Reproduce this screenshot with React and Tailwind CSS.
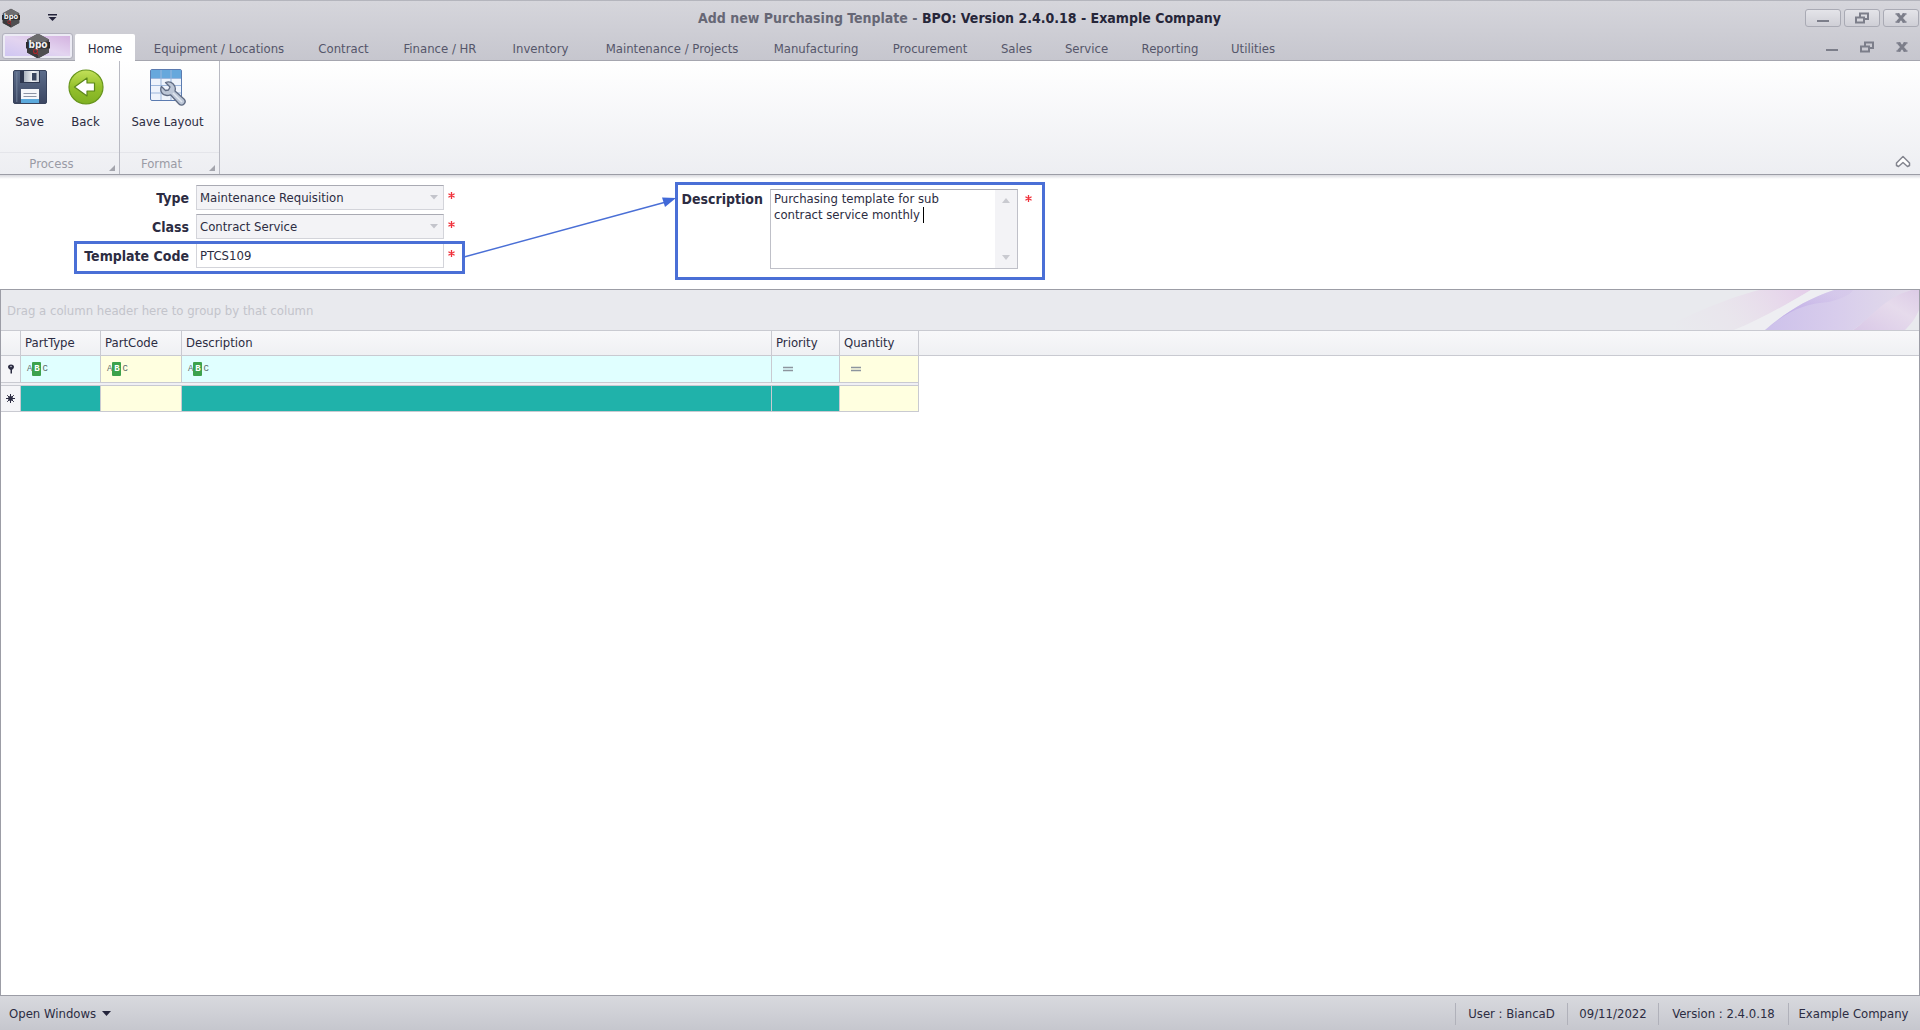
import { useState } from "react";
import clsx from "clsx";

const TABS = [
  { name: "Home", width: "w-[60px] mr-[2px]" },
  { name: "Equipment / Locations", width: "w-[164px]" },
  { name: "Contract", width: "w-[85px]" },
  { name: "Finance / HR", width: "w-[108px]" },
  { name: "Inventory", width: "w-[93px]" },
  { name: "Maintenance / Projects", width: "w-[170px]" },
  { name: "Manufacturing", width: "w-[118px]" },
  { name: "Procurement", width: "w-[110px]" },
  { name: "Sales", width: "w-[63px]" },
  { name: "Service", width: "w-[77px]" },
  { name: "Reporting", width: "w-[90px]" },
  { name: "Utilities", width: "w-[76px]" },
];

const COLUMNS = [
  { name: "PartType", filter: "abc", tint: "bg-[#e0ffff]", fill: "bg-[#20b2aa]" },
  { name: "PartCode", filter: "abc", tint: "bg-[#ffffe0]", fill: "bg-[#ffffe0]" },
  { name: "Description", filter: "abc", tint: "bg-[#e0ffff]", fill: "bg-[#20b2aa]" },
  { name: "Priority", filter: "eq", tint: "bg-[#e0ffff]", fill: "bg-[#20b2aa]" },
  { name: "Quantity", filter: "eq", tint: "bg-[#ffffe0]", fill: "bg-[#ffffe0]" },
];

const STATUS = [
  { text: "User : BiancaD", width: "w-28" },
  { text: "09/11/2022", width: "w-[91px]" },
  { text: "Version : 2.4.0.18", width: "w-[130px]" },
  { text: "Example Company", width: "w-[130px]" },
];

function Logo({ className }) {
  return (
    <svg viewBox="0 0 24 26" className={className} aria-hidden="true">
      <path d="M12 0.5 23 6.5V19.5L12 25.5 1 19.5V6.5Z" fill="#4b4b4d" />
      <path d="M12 0.5 23 6.5 12 12 1 6.5Z" fill="#6c6c6e" />
      <path d="M1 15 12 18V25.5L1 19.5Z" fill="#3a3a3c" />
      <path d="M23 15 12 18V25.5L23 19.5Z" fill="#4f4f51" />
      <rect x="0" y="9" width="24" height="6.5" fill="#2c2c2e" />
      <text x="12" y="14.5" textAnchor="middle" fontSize="10" fontWeight="bold" fill="#f1f1f1">
        bpo
      </text>
      <circle cx="9.5" cy="18.5" r="2" fill="none" stroke="#a8282c" strokeWidth="1.1" />
      <path d="M10.5 20.5 12.5 22" stroke="#a8282c" strokeWidth="1" />
    </svg>
  );
}

function SaveIcon() {
  return (
    <svg width="34" height="34" viewBox="1 1 34 34" aria-hidden="true">
      <defs>
        <linearGradient id="disk" x1="0" y1="0" x2="0" y2="1">
          <stop offset="0" stopColor="#5c6d8b" />
          <stop offset="1" stopColor="#3b4661" />
        </linearGradient>
        <linearGradient id="shutter" x1="0" y1="0" x2="1" y2="0">
          <stop offset="0" stopColor="#aab3c0" />
          <stop offset="0.6" stopColor="#f3f5f8" />
          <stop offset="1" stopColor="#c4cbd5" />
        </linearGradient>
      </defs>
      <rect x="1.5" y="1.5" width="33" height="33" rx="1.5" fill="url(#disk)" stroke="#38435c" />
      <rect x="4" y="3" width="1.5" height="30" fill="#76869f" opacity="0.6" />
      <rect x="8" y="2" width="20" height="12" fill="#2d3750" />
      <rect x="12" y="2" width="15" height="11" fill="url(#shutter)" />
      <rect x="20" y="4" width="4.5" height="7.5" fill="#39455f" />
      <rect x="9" y="20" width="18" height="14" fill="#f4f6fa" />
      <path d="M11.5 24.5H24.5M11.5 27.5H24.5" stroke="#8b93a5" />
      <rect x="9" y="30" width="18" height="4" fill="#5ba9dc" />
    </svg>
  );
}

function BackIcon() {
  return (
    <svg width="36" height="36" viewBox="0 0 36 36" aria-hidden="true">
      <defs>
        <linearGradient id="ball" x1="0" y1="0" x2="0" y2="1">
          <stop offset="0" stopColor="#c3e05a" />
          <stop offset="0.5" stopColor="#95c12c" />
          <stop offset="1" stopColor="#7fb022" />
        </linearGradient>
      </defs>
      <circle cx="18" cy="18" r="17" fill="url(#ball)" stroke="#67951c" strokeWidth="1.2" />
      <path d="M6.5 18 19 9V14H26.5V22H19V27Z" fill="#fff" stroke="#5c861b" strokeWidth="1.2" strokeLinejoin="round" />
    </svg>
  );
}

function LayoutIcon() {
  return (
    <svg width="38" height="38" viewBox="0 0 38 38" aria-hidden="true">
      <rect x="1.5" y="1.5" width="31" height="31" rx="1.5" fill="#eef3fb" stroke="#5b7bb0" />
      <rect x="2" y="2" width="30" height="8.5" fill="#67a8dc" />
      <path d="M2 10.5H32M2 17.5H32M2 25H32M12 2V32M22 2V32" stroke="#9db7dc" fill="none" />
      <path
        d="M16.5 14.5 21 19 19.5 22 16.5 22.5 12.5 18.5C10.5 22.5 13 27.5 18 27.5 19.5 27.5 20.5 27.2 21.5 26.8L29.5 35.5C31 37.5 33.5 37.5 35 36 36.5 34.5 36.5 32.5 35 31L26 23C27.5 18 23 12 16.5 14.5Z"
        fill="#bcc6d6"
        stroke="#5f6b83"
        strokeWidth="1.3"
        strokeLinejoin="round"
      />
      <path d="M24 25 33 34" stroke="#e1e7ef" strokeWidth="1.5" />
    </svg>
  );
}

function MinimizeGlyph() {
  return (
    <svg width="14" height="12" viewBox="0 0 14 12" aria-hidden="true">
      <path d="M1 9H13" stroke="#7c7e8a" strokeWidth="2" />
    </svg>
  );
}

function RestoreGlyph() {
  return (
    <svg width="14" height="12" viewBox="0 0 14 12" aria-hidden="true">
      <path d="M5 5V1.5H13V7H9" fill="none" stroke="#7c7e8a" strokeWidth="2" />
      <rect x="1" y="5.5" width="8" height="5" fill="none" stroke="#7c7e8a" strokeWidth="2" />
    </svg>
  );
}

function CloseGlyph() {
  return (
    <svg width="14" height="12" viewBox="0 0 14 12" aria-hidden="true">
      <path d="M3.5 2 10.5 10M10.5 2 3.5 10" stroke="#7c7e8a" strokeWidth="3" />
      <path d="M1.5 2H5.5M8.5 2H12.5M1.5 10H5.5M8.5 10H12.5" stroke="#7c7e8a" strokeWidth="1.5" />
    </svg>
  );
}

const WINDOW_GLYPHS = [
  ["Minimize", MinimizeGlyph],
  ["Restore", RestoreGlyph],
  ["Close", CloseGlyph],
];

function TitleBar() {
  return (
    <header className="grid h-[34px] grid-cols-[1fr_auto_1fr] items-center border-t border-[#b4b5bd] pr-px">
      <div className="flex items-center gap-7 pl-[2px]">
        <Logo className="h-5 w-[18px]" />
        <button type="button" aria-label="Customize toolbar" className="text-[#23233a]">
          <svg width="9" height="7" viewBox="0 0 9 7" fill="currentColor" aria-hidden="true">
            <path d="M0 0H9V1.5H0ZM0.5 3H8.5L4.5 7Z" />
          </svg>
        </button>
      </div>
      <h1 className="text-sm leading-4 font-bold text-[#262639]">
        <span className="text-[#666775]">Add new Purchasing Tenplate - </span>
        BPO: Version 2.4.0.18 - Example Company
      </h1>
      <div className="flex justify-end gap-[3px]">
        {WINDOW_GLYPHS.map(([label, Glyph]) => (
          <button
            key={label}
            type="button"
            aria-label={label}
            className="flex h-[18px] w-9 items-center justify-center rounded-[3px] border border-[#a9aab4] bg-linear-to-b from-[#e4e4e9] to-[#cfcfd6]"
          >
            <Glyph />
          </button>
        ))}
      </div>
    </header>
  );
}

function TabBar({ active, onSelect }) {
  return (
    <nav className="flex h-[27px] items-stretch border-b border-[#a5a6af]">
      <button
        type="button"
        aria-label="Application menu"
        className="mr-[3px] ml-[3px] flex h-6 w-[69px] items-center justify-center rounded-[2px] border-2 border-[#ecebf4] bg-linear-to-tr from-[#cfc6f2] via-[#e3d4f0] to-[#d4b3e0] outline outline-[#b3b3bf]"
      >
        <Logo className="h-[26px] w-6 shrink-0" />
      </button>
      {TABS.map(({ name, width }) => (
        <button
          key={name}
          type="button"
          onClick={() => onSelect(name)}
          className={clsx(
            "h-[27px] shrink-0 rounded-t-[2px] pt-[2px] text-center whitespace-nowrap",
            width,
            name === active ? "bg-white text-[#2c2c42]" : "text-[#55566a]",
          )}
        >
          {name}
        </button>
      ))}
      <div className="ml-auto flex items-center gap-[21px] pr-[11px]">
        {WINDOW_GLYPHS.map(([label, Glyph]) => (
          <button key={label} type="button" aria-label={`${label} document`}>
            <Glyph />
          </button>
        ))}
      </div>
    </nav>
  );
}

function RibbonGroup({ caption, className, children }) {
  return (
    <section className={clsx("flex flex-col border-r border-[#b9bac3]", className)}>
      <div className="flex flex-1 items-start justify-center pt-[7px] pr-1">{children}</div>
      <footer className="flex h-[22px] items-center border-t border-[#e4e5ea] pr-1 text-[#9a9ba5]">
        <span className="flex-1 pt-px pr-[6px] text-center">{caption}</span>
        <svg width="6" height="6" viewBox="0 0 6 6" className="mb-[3px] self-end" aria-hidden="true">
          <path d="M6 0V6H0Z" fill="#a4a5ad" />
        </svg>
      </footer>
    </section>
  );
}

function RibbonButton({ label, className, children }) {
  return (
    <button type="button" className={clsx("flex flex-col items-center text-[#2c2c42]", className)}>
      <span className="flex h-[38px] items-center">{children}</span>
      <span className="mt-2 whitespace-nowrap">{label}</span>
    </button>
  );
}

function Ribbon() {
  return (
    <div className="flex h-[114px] border-b border-[#9c9da6] bg-linear-to-b from-white to-[#edeef2]">
      <RibbonGroup caption="Process" className="w-[120px]">
        <RibbonButton label="Save" className="w-14">
          <SaveIcon />
        </RibbonButton>
        <RibbonButton label="Back" className="w-14">
          <BackIcon />
        </RibbonButton>
      </RibbonGroup>
      <RibbonGroup caption="Format" className="w-[100px]">
        <RibbonButton label="Save Layout" className="w-24">
          <LayoutIcon />
        </RibbonButton>
      </RibbonGroup>
      <button type="button" aria-label="Collapse ribbon" className="mt-auto mr-[9px] mb-[6px] ml-auto">
        <svg width="16" height="13" viewBox="0 0 16 13" aria-hidden="true">
          <path
            d="M8 1.5 14.5 8V10.5L12.5 11.5 8 7.5 3.5 11.5 1.5 10.5V8Z"
            fill="#fff"
            stroke="#83858f"
            strokeWidth="1.5"
            strokeLinejoin="round"
          />
        </svg>
      </button>
    </div>
  );
}

function Required() {
  return (
    <svg width="7" height="7" viewBox="0 0 8 8" className="mb-1 shrink-0" aria-label="required">
      <path d="M4 0V8M0.5 2 7.5 6M7.5 2 0.5 6" stroke="#f0323c" strokeWidth="1.5" />
    </svg>
  );
}

function SelectField({ id, label, value }) {
  return (
    <>
      <label htmlFor={id} className="pr-[3px] text-right text-sm leading-4 font-bold">
        {label}
      </label>
      <div className="relative">
        <select
          id={id}
          defaultValue={value}
          className="h-[25px] w-full appearance-none border border-[#d3d4da] border-t-[#a9aab3] bg-[#f3f3f6] px-[3px]"
        >
          <option>{value}</option>
        </select>
        <svg width="8" height="5" viewBox="0 0 8 5" className="pointer-events-none absolute top-[10px] right-[6px]" aria-hidden="true">
          <path d="M0 0H8L4 4.5Z" fill="#c3c4cb" />
        </svg>
      </div>
      <Required />
    </>
  );
}

function TemplateForm() {
  const [code, setCode] = useState("PTCS109");
  const [description, setDescription] = useState("Purchasing template for sub\ncontract service monthly");

  return (
    <form className="relative flex h-[114px] items-start bg-white bg-linear-to-b from-[#d9dadf] to-white to-[4px] pt-[10px] pl-1 text-[#2c2c42]">
      <div className="grid w-[451px] grid-cols-[188px_248px_7px] items-center gap-1">
        <SelectField id="type" label="Type" value="Maintenance Requisition" />
        <SelectField id="class" label="Class" value="Contract Service" />
        <label htmlFor="code" className="pr-[3px] text-right text-sm leading-4 font-bold">
          Template Code
        </label>
        <input
          id="code"
          value={code}
          onChange={(e) => setCode(e.target.value)}
          className="h-[25px] border border-[#d3d4da] border-t-[#a9aab3] bg-white px-[3px]"
        />
        <Required />
      </div>
      <div className="ml-[225px] flex items-start gap-[7px] pt-1">
        <label htmlFor="description" className="w-[83px] text-right text-sm leading-5 font-bold">
          Description
        </label>
        <div className="relative flex h-20 w-[248px] border border-[#bfc0c8] border-t-[#a9aab3]">
          <textarea
            id="description"
            value={description}
            onChange={(e) => setDescription(e.target.value)}
            className="block flex-1 resize-none overflow-hidden px-[3px] py-px leading-4 outline-none"
          />
          <span className="absolute top-[17px] left-[152px] h-4 w-px bg-black" />
          <div className="flex w-[22px] flex-col items-center justify-between bg-[#f3f3f6] py-2">
            <svg width="8" height="5" viewBox="0 0 8 5" aria-hidden="true">
              <path d="M0 5H8L4 0Z" fill="#c9cad0" />
            </svg>
            <svg width="8" height="5" viewBox="0 0 8 5" aria-hidden="true">
              <path d="M0 0H8L4 5Z" fill="#c9cad0" />
            </svg>
          </div>
        </div>
        <div className="pt-[6px]">
          <Required />
        </div>
      </div>

      {/* guide linking the code to its description */}
      <div className="pointer-events-none absolute top-[66px] left-[74px] h-[33px] w-[391px] border-3 border-[#4a6fd6]" />
      <div className="pointer-events-none absolute top-[7px] left-[675px] h-[98px] w-[370px] border-3 border-[#4a6fd6]" />
      <svg width="214" height="64" viewBox="0 0 214 64" className="pointer-events-none absolute top-[20px] left-[463px]" aria-hidden="true">
        <path d="M1 62 203 7" stroke="#4a6fd6" strokeWidth="1.5" />
        <path d="M213 3 199 2.5 202 12Z" fill="#4169d8" />
      </svg>
    </form>
  );
}

function FilterIcon({ kind }) {
  if (kind === "eq") {
    return (
      <svg width="12" height="6" viewBox="0 0 12 6" aria-label="Equals">
        <path d="M1 1.5H11M1 4.5H11" stroke="#8d959e" strokeWidth="1.5" />
      </svg>
    );
  }
  return (
    <span className="flex items-center font-['Liberation_Mono',monospace] text-[9px] leading-[14px] text-[#5f6b6b]" aria-label="Contains">
      A<span className="mr-px w-[9px] rounded-[1px] bg-[#3da24c] text-center font-bold text-white">B</span>C
    </span>
  );
}

function GroupPanel() {
  return (
    <div className="relative flex h-[41px] items-center overflow-hidden border-b border-[#c9cad1] bg-[#e9eaee] pt-[2px] pl-[6px] text-[#c3c4cb]">
      <span>Drag a column header here to group by that column</span>
      <svg width="280" height="40" viewBox="0 0 280 40" className="absolute top-0 right-0" aria-hidden="true">
        <defs>
          <linearGradient id="pink" x1="0" y1="0.5" x2="1" y2="0.3">
            <stop offset="0" stopColor="#e9dcea" stopOpacity="0" />
            <stop offset="0.4" stopColor="#e9dcea" stopOpacity="0.3" />
            <stop offset="1" stopColor="#e5d0ea" />
          </linearGradient>
          <linearGradient id="violet" x1="0" y1="0" x2="1" y2="0">
            <stop offset="0" stopColor="#cdc1eb" />
            <stop offset="0.5" stopColor="#d8cdec" />
            <stop offset="1" stopColor="#e2dbea" />
          </linearGradient>
          <linearGradient id="fold" x1="0" y1="1" x2="0.6" y2="0">
            <stop offset="0" stopColor="#b9a6e4" stopOpacity="0.2" />
            <stop offset="0.4" stopColor="#bba5e6" stopOpacity="0.7" />
            <stop offset="1" stopColor="#c9b6e6" stopOpacity="0.2" />
          </linearGradient>
          <linearGradient id="petal" x1="0" y1="1" x2="1" y2="0">
            <stop offset="0" stopColor="#d9c8e7" />
            <stop offset="0.6" stopColor="#e6dbec" />
            <stop offset="1" stopColor="#dccbe6" />
          </linearGradient>
        </defs>
        <path d="M20 40C60 20 90 8 120 0H172C145 16 120 30 95 40Z" fill="url(#pink)" />
        <path d="M95 40C120 30 145 16 172 0H195C165 12 145 26 126 40Z" fill="#eeeef2" />
        <path d="M126 40C145 24 165 10 195 0H272C245 10 230 30 214 40Z" fill="url(#violet)" />
        <path d="M128 39C150 20 165 14 190 12 205 8 212 4 214 0H195C165 10 145 24 128 39Z" fill="url(#fold)" />
        <path d="M214 40C232 28 245 8 272 0H280V20C276 30 270 36 266 40Z" fill="url(#petal)" />
      </svg>
    </div>
  );
}

function PartsGrid() {
  return (
    <main className="flex-1 border-x border-t border-[#9c9da6] bg-white">
      <GroupPanel />
      <table className="w-full table-fixed border-separate border-spacing-0 text-[#2c2c42]">
        <colgroup>
          <col className="w-5" />
          <col className="w-20" />
          <col className="w-[81px]" />
          <col className="w-[590px]" />
          <col className="w-[68px]" />
          <col className="w-[79px]" />
          <col />
        </colgroup>
        <thead>
          <tr className="h-[25px] bg-linear-to-b from-[#f8f8fa] to-[#eff0f3]">
            <th className="border-r border-b border-[#c9cad1]" />
            {COLUMNS.map((col) => (
              <th key={col.name} className="border-r border-b border-[#c9cad1] px-1 text-left font-normal">
                {col.name}
              </th>
            ))}
            <th className="border-b border-[#c9cad1]" />
          </tr>
        </thead>
        <tbody>
          <tr className="h-[27px]">
            <td className="border-r border-b border-[#c9cad1] bg-[#f5f5f8]">
              <svg width="8" height="10" viewBox="0 0 8 10" className="mx-auto" aria-hidden="true">
                <path d="M4 0.5C6 0.5 7 1.5 7 3 7 4.5 5 5.5 5 6V9.5H3.5V6C3 5.5 1 4.5 1 3 1 1.5 2 0.5 4 0.5Z" fill="#2c2c42" />
                <circle cx="4" cy="2.5" r="0.8" fill="#c9cad6" />
              </svg>
            </td>
            {COLUMNS.map((col) => (
              <td key={col.name} className={clsx("border-r border-b border-[#c9cad1]", col.tint, col.filter === "eq" ? "pl-[10px]" : "pl-[6px]")}>
                <FilterIcon kind={col.filter} />
              </td>
            ))}
            <td />
          </tr>
          <tr className="h-[3px]">
            <td colSpan={6} className="border-r border-b border-[#c9cad1] bg-[#f0f0f4]" />
            <td />
          </tr>
          <tr className="h-[26px]">
            <td className="border-r border-b border-[#c9cad1] bg-[#f5f5f8]">
              <svg width="9" height="9" viewBox="0 0 9 9" className="mx-auto" aria-hidden="true">
                <path d="M4.5 0V9M0 4.5H9M1.2 1.2 7.8 7.8M7.8 1.2 1.2 7.8" stroke="#2c2c42" />
                <circle cx="4.5" cy="4.5" r="2.2" fill="none" stroke="#2c2c42" strokeWidth="0.8" />
              </svg>
            </td>
            {COLUMNS.map((col) => (
              <td key={col.name} className={clsx("border-r border-b border-[#c9cad1]", col.fill)} />
            ))}
            <td />
          </tr>
        </tbody>
      </table>
    </main>
  );
}

function StatusBar() {
  return (
    <footer className="flex h-[35px] items-center border-t border-[#9c9da6] bg-linear-to-b from-[#d8d9de] to-[#c6c7ce] pt-px pr-[2px] text-[#2c2c42]">
      <button type="button" className="flex items-center gap-[6px] pl-[9px]">
        Open Windows
        <svg width="9" height="5" viewBox="0 0 9 5" aria-hidden="true">
          <path d="M0 0H9L4.5 5Z" fill="#23233a" />
        </svg>
      </button>
      <ul className="ml-auto flex items-center">
        {STATUS.map(({ text, width }) => (
          <li key={text} className={clsx("flex h-[22px] items-center justify-center border-l border-[#b0b1ba]", width)}>
            {text}
          </li>
        ))}
      </ul>
    </footer>
  );
}

export default function App() {
  const [tab, setTab] = useState("Home");

  return (
    <div className="flex min-h-screen flex-col bg-[#c8c8d0] font-['DejaVu_Sans_Condensed','DejaVu_Sans',sans-serif] text-[13px] leading-4">
      <div className="bg-linear-to-b from-[#d6d6dc] to-[#c6c6ce]">
        <TitleBar />
        <TabBar active={tab} onSelect={setTab} />
      </div>
      <Ribbon />
      <TemplateForm />
      <PartsGrid />
      <StatusBar />
    </div>
  );
}
